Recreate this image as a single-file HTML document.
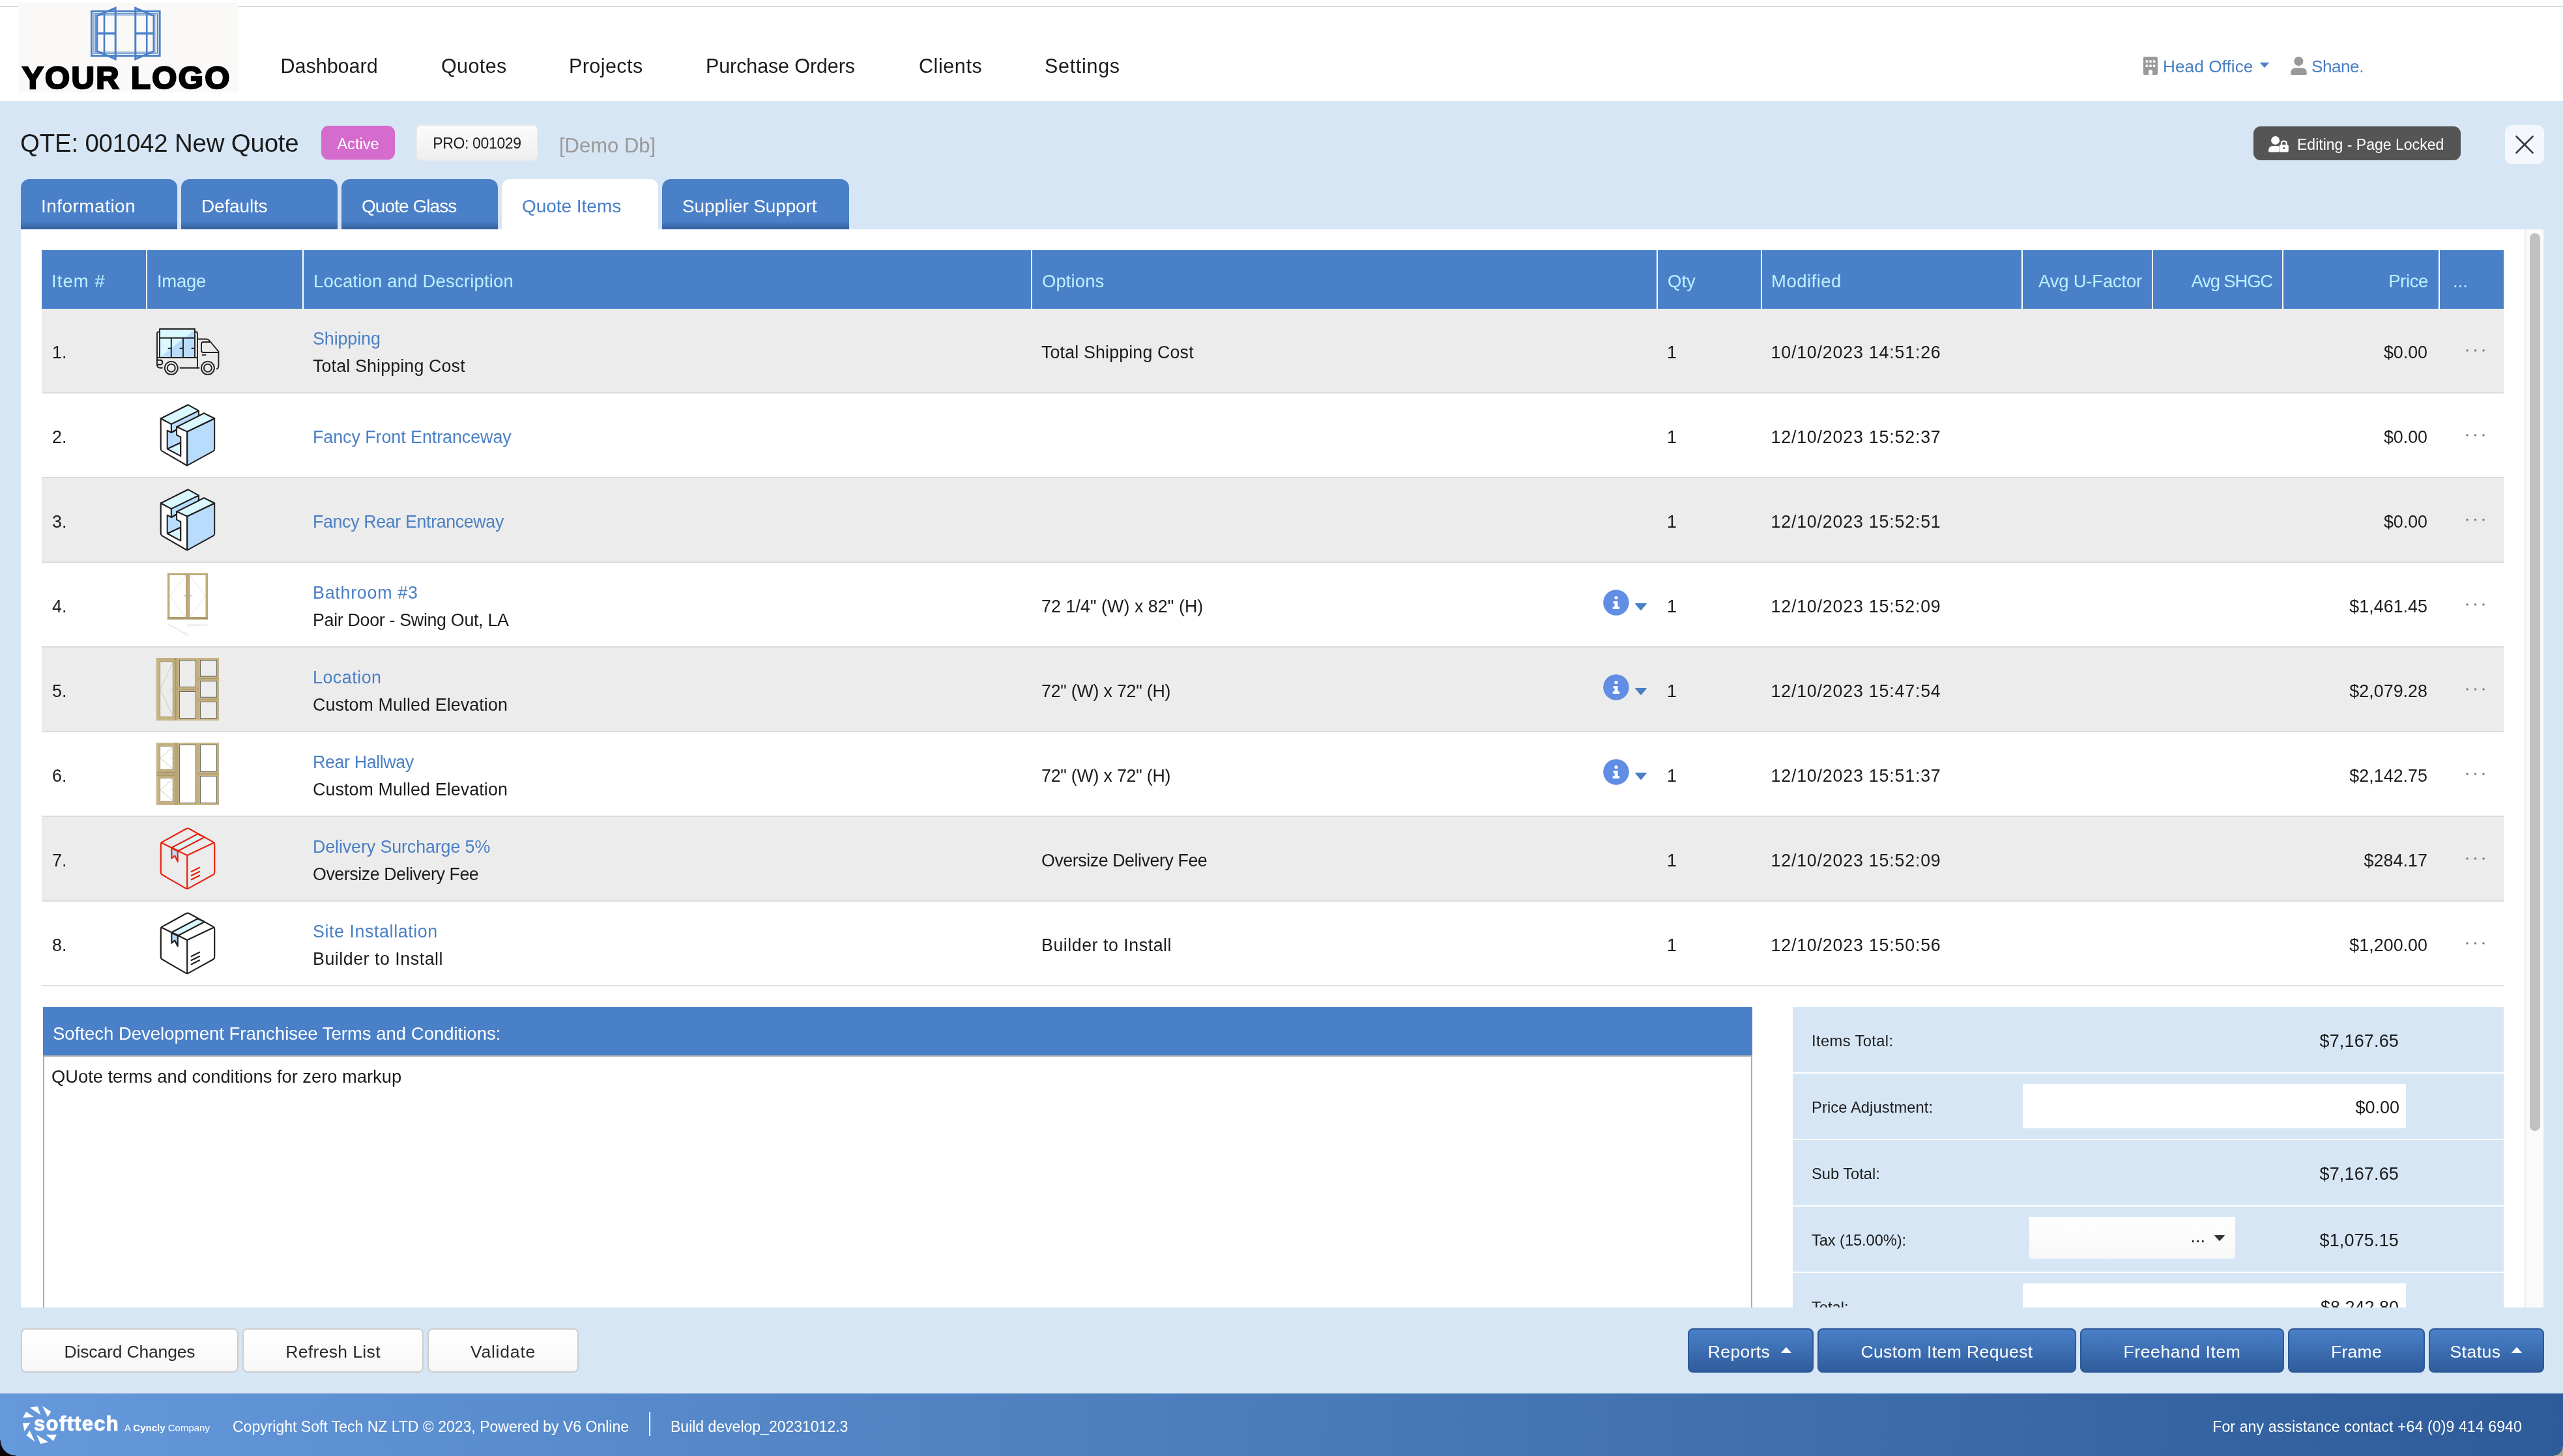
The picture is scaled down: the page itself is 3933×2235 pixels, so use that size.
<!DOCTYPE html>
<html lang="en">
<head>
<meta charset="utf-8">
<title>Quote 001042</title>
<style>
*{box-sizing:border-box;margin:0;padding:0}
html,body{width:3933px;height:2235px;overflow:hidden;background:#d6e6f5}
body{font-family:"Liberation Sans",sans-serif;color:#1b1b1b;position:relative;font-size:26.8px;will-change:transform}
.abs{position:absolute}
.t{position:absolute;white-space:nowrap;line-height:1}
svg{position:absolute;display:block;overflow:visible}
#hdr{left:0;top:0;width:3933px;height:155px;background:#fff}
#topline{left:0;top:9px;width:3933px;height:2px;background:#dadada}
#logo{left:28px;top:4px;width:338px;height:138px;background:#faf9f7}
#logotxt{left:34px;top:94.700px;font-size:49px;font-weight:bold;color:#000;-webkit-text-stroke:2.600px #000;letter-spacing:2.350px}
.nav{font-size:30.5px;top:86px;color:#1b1b1b}
.navr{font-size:26.2px;top:88.5px;color:#4a7fc5}
#title{left:31px;top:201px;font-size:38.4px;color:#1b1b1b}
#active{left:493px;top:193px;width:113px;height:52px;border-radius:11px;background:#d56bcc;color:#fff;font-size:23.5px;text-align:center;line-height:56px}
#pro{left:638px;top:191px;width:188px;height:56px;border-radius:8px;background:linear-gradient(#fbfbfb,#efefef);border:2px solid #e6e9ec;color:#1b1b1b;font-size:23px;text-align:center;line-height:55.500px}
#demo{left:858px;top:207.500px;font-size:31px;color:#9b9997}
#editing{left:3458px;top:194px;width:318px;height:52px;border-radius:11px;background:#555;color:#fff;font-size:23px;line-height:52px}
#closeb{left:3844px;top:192px;width:60px;height:60px;border-radius:11px;background:#f4f8fc}
.tab{top:275px;height:77px;border-radius:13px 13px 0 0;background:linear-gradient(#4a80c8 0,#4a80c8 84%,#345f9e 100%);color:#fff;font-size:28px;line-height:84px;padding-left:31px;white-space:nowrap}
.tab.on{background:#fff;color:#4a7fc5}
#panel{left:32px;top:352px;width:3872px;height:1655px;background:#fff}
#sbtrack{left:3874px;top:352px;width:30px;height:1655px;background:#fafafa;border-left:2px solid #ececec;border-right:2px solid #efefef}
#sbthumb{left:3882px;top:358px;width:16px;height:1378px;border-radius:8px;background:#c1c1c1}
#thead{left:64px;top:384px;width:3778px;height:90px;background:#4a80c8}
.th{position:absolute;top:0;height:90px;line-height:96px;color:#bdf0ff;font-size:27.5px;white-space:nowrap}
.vs{position:absolute;top:0;width:2px;height:90px;background:#fff}
.row{position:absolute;left:64px;width:3778px;height:130px;border-bottom:2px solid #dcdcdc}
.row.g{background:#ececec}
.row .t{font-size:26.8px}
.ic{left:156px;top:6px}
.lk{color:#4a7fc5}
.l1{top:33.3px}.l2{top:74.5px}.m{top:53.8px}
.num{left:16px}.loc{left:416px}.opt{left:1534px}.qty{left:2494px}.mod{left:2653.500px;letter-spacing:.8px}.prc{right:117px}
.dots{left:3719px;top:61px}
.info{left:2396px;top:40.500px}
.car{left:2444.500px;top:62px}
#termh{left:66px;top:1546px;width:2623px;height:74px;background:#4a80c8;color:#fff;font-size:27.5px;line-height:81px;padding-left:15px;white-space:nowrap}
#termb{left:66px;top:1620px;width:2623px;height:387px;border-left:2px solid #ababab;border-right:2px solid #ababab;border-top:2px solid #b0b0b0;background:#fff}
.tot{position:absolute;left:2751px;width:1091px;height:99.5px;background:#d6e6f5}
.tl{font-size:23.7px;left:29px;top:41px}
.tv{font-size:27px;right:161px;top:39px}
.inp{position:absolute;background:#fff}
.bw{position:absolute;top:2039px;height:68px;border-radius:8px;background:linear-gradient(#fff,#f7f7f7);border:2px solid #cdcdcd;color:#2a2a2a;font-size:26.5px;line-height:69px;text-align:center;white-space:nowrap}
.bb{position:absolute;top:2039px;height:68px;border-radius:8px;background:linear-gradient(#4a80c8,#2f5c9c);border:2px solid #2e5896;color:#fff;font-size:26.5px;line-height:68px;text-align:center;white-space:nowrap}
#foot{left:0;top:2139px;width:3933px;height:96px;background:linear-gradient(92deg,#6599dc 0,#4a7bba 50%,#2e5b99 100%)}
.ft{font-size:23px;color:#fff;top:2179px}
</style>
</head>
<body>
<div class="abs" id="hdr"></div>
<div class="abs" id="topline"></div>
<div class="abs" id="logo"></div>
<svg style="left:139px;top:10px" width="108" height="84" viewBox="139 10 108 84" fill="none" stroke="#4a80c8">
<rect x="140.5" y="17.4" width="104.6" height="68.2" stroke-width="3"/>
<rect x="144" y="20.8" width="97.6" height="61.4" stroke-width="1.2"/>
<rect x="146.3" y="23" width="93" height="57" stroke-width="1"/>
<path d="M148.8 24.4L177.2 12.3V90.7L148.8 78.6Z" stroke-width="3"/>
<path d="M236 24.4L207.8 12.3V90.7L236 78.6Z" stroke-width="3"/>
<path d="M160 20V83M225.2 20V83" stroke-width="2.6"/>
<path d="M149 51.2H177M208 51.2H236" stroke-width="3.4"/>
</svg>
<div class="t" id="logotxt">YOUR LOGO</div>
<div class="t nav" style="left:430.500px"><span style="letter-spacing:-0.01px">Dashboard</span></div>
<div class="t nav" style="left:677px"><span style="letter-spacing:0.39px">Quotes</span></div>
<div class="t nav" style="left:873px"><span style="letter-spacing:0.43px">Projects</span></div>
<div class="t nav" style="left:1083px"><span style="letter-spacing:-0.11px">Purchase Orders</span></div>
<div class="t nav" style="left:1410px"><span style="letter-spacing:0.58px">Clients</span></div>
<div class="t nav" style="left:1603px"><span style="letter-spacing:0.69px">Settings</span></div>
<svg style="left:3289px;top:86.5px" width="22" height="28" viewBox="0 0 22 28"><path d="M2.5 0H19.5Q22 0 22 2.5V25.5Q22 28 19.5 28H14V22.5Q14 20 11 20Q8 20 8 22.500V28H2.5Q0 28 0 25.5V2.5Q0 0 2.5 0Z" fill="#999"/><g fill="#fff"><rect x="3.6" y="5.6" width="3.6" height="3.4" rx=".6"/><rect x="9.2" y="5.600" width="3.6" height="3.4" rx=".6"/><rect x="14.8" y="5.6" width="3.6" height="3.4" rx=".6"/><rect x="3.6" y="12.6" width="3.6" height="3.4" rx=".6"/><rect x="9.2" y="12.6" width="3.6" height="3.4" rx=".6"/><rect x="14.8" y="12.6" width="3.6" height="3.4" rx=".6"/></g></svg>
<div class="t navr" style="left:3319px"><span style="letter-spacing:0.06px">Head Office</span></div>
<svg style="left:3467px;top:96px" width="16" height="8" viewBox="0 0 16 8"><path d="M.6 0H15.4L8 8Z" fill="#4a7fc5"/></svg>
<svg style="left:3515px;top:86.5px" width="25" height="28" viewBox="0 0 25 28" fill="#999"><circle cx="12.3" cy="7.100" r="7.1"/><path d="M0 26Q0 17.2 8 17.2H17Q25 17.2 25 26Q25 28 23 28H2Q0 28 0 26Z"/></svg>
<div class="t navr" style="left:3547px"><span style="letter-spacing:-0.51px">Shane.</span></div>
<div class="t" id="title"><span style="letter-spacing:-0.17px">QTE: 001042 New Quote</span></div>
<div class="abs" id="active"><span style="letter-spacing:0.04px">Active</span></div>
<div class="abs" id="pro"><span style="letter-spacing:-0.37px">PRO: 001029</span></div>
<div class="t" id="demo">[Demo Db]</div>
<div class="abs" id="editing"><svg style="left:23px;top:15px" width="31" height="25" viewBox="0 0 31 25" fill="#fff"><circle cx="10.6" cy="6.500" r="6.5"/><path d="M0 22.5Q0 15 7 15H14.5Q16.500 15 16.500 17V24.5H1.500Q0 24.5 0 22.5Z"/><rect x="16.8" y="13.2" width="14" height="11.3" rx="2"/><path d="M20 13.500V11Q20 7.600 23.800 7.600Q27.600 7.600 27.600 11V13.500" fill="none" stroke="#fff" stroke-width="2.200"/><circle cx="23.8" cy="18.6" r="1.5" fill="#555"/></svg><span style="position:absolute;left:67px;top:2px;white-space:nowrap"><span style="letter-spacing:0.01px">Editing - Page Locked</span></span></div>
<div class="abs" id="closeb"><svg style="left:17px;top:17px" width="26" height="26" viewBox="0 0 26 26"><path d="M0.500 .5L25.500 25.500M25.500 .5L.5 25.500" stroke="#343a40" stroke-width="2.600" stroke-linecap="round"/></svg></div>
<div class="abs tab" style="left:32px;width:240px"><span style="letter-spacing:0.46px">Information</span></div>
<div class="abs tab" style="left:278px;width:240px"><span style="letter-spacing:-0.16px">Defaults</span></div>
<div class="abs tab" style="left:524px;width:240px"><span style="letter-spacing:-0.93px">Quote Glass</span></div>
<div class="abs tab on" style="left:770px;width:240px"><span style="letter-spacing:-0.03px">Quote Items</span></div>
<div class="abs tab" style="left:1016px;width:287px"><span style="letter-spacing:-0.14px">Supplier Support</span></div>
<div class="abs" id="panel"></div>
<div class="abs" id="sbtrack"></div>
<div class="abs" id="sbthumb"></div>
<div class="abs" id="thead">
<div class="th" style="left:15px"><span style="letter-spacing:1.10px">Item #</span></div><div class="vs" style="left:160px"></div>
<div class="th" style="left:177px"><span style="letter-spacing:-0.28px">Image</span></div><div class="vs" style="left:400px"></div>
<div class="th" style="left:417px"><span style="letter-spacing:0.18px">Location and Description</span></div><div class="vs" style="left:1518px"></div>
<div class="th" style="left:1535px"><span style="letter-spacing:0.09px">Options</span></div><div class="vs" style="left:2478px"></div>
<div class="th" style="left:2495px"><span style="letter-spacing:0.00px">Qty</span></div><div class="vs" style="left:2638px"></div>
<div class="th" style="left:2654px"><span style="letter-spacing:0.48px">Modified</span></div><div class="vs" style="left:3038px"></div>
<div class="th" style="right:555px"><span style="letter-spacing:-0.21px">Avg U-Factor</span></div><div class="vs" style="left:3238px"></div>
<div class="th" style="right:355px"><span style="letter-spacing:-1.20px">Avg SHGC</span></div><div class="vs" style="left:3438px"></div>
<div class="th" style="right:116px"><span style="letter-spacing:-0.36px">Price</span></div><div class="vs" style="left:3678px"></div>
<div class="th" style="left:3700px">...</div>
</div>
<div class="row g" style="top:474px"><div class="t num m">1.</div><svg class="ic" viewBox="0 0 140 120" width="140" height="120" fill="none" stroke="#231f20" stroke-width="1.9" stroke-linecap="round" stroke-linejoin="round">
<rect x="25" y="25" width="54" height="44" fill="#d9f8ff" stroke="none"/>
<polygon points="79,25 79,69 25,69" fill="#b8dcfb" stroke="none"/>
<polygon points="79,25 79,38.7 62,38.7" fill="#d9f8ff" stroke="none"/>
<polygon points="79,25.5 65,38 79,38" fill="#b8dcfb" stroke="none"/>
<rect x="25" y="25" width="54" height="44"/>
<path d="M25 38.7H79M42.8 38.7V69M61 38.7V69M38.4 54.8H42.4M56.4 54.8H60.4M74.4 54.8H78.4"/>
<path d="M24 29.2Q21 29.2 21 32.5V79.7Q21 84.7 26 84.7H29"/>
<path d="M80 29.2Q83 29.2 83 32.5V84.7"/>
<path d="M21 69H83"/>
<path d="M21 72.7H25.5Q29.3 72.7 29.3 76.2Q29.3 79.7 25.5 79.7H21"/>
<circle cx="42.8" cy="84.9" r="10"/><circle cx="42.8" cy="84.9" r="6"/>
<circle cx="98.9" cy="84.9" r="10"/><circle cx="98.9" cy="84.9" r="6"/>
<path d="M56.5 84.7H85.5"/>
<path d="M84 40.5H96.5Q99.5 40.5 101.5 43L115.4 59.6V81Q115.4 85.5 112.5 86.3"/>
<path d="M101.8 45H92Q89 45 89 48V58Q89 61 92 61H115.2"/>
<path d="M90.5 64.9H95.5"/>
</svg><div class="t loc lk l1"><span style="letter-spacing:-0.07px">Shipping</span></div><div class="t loc l2"><span style="letter-spacing:0.15px">Total Shipping Cost</span></div><div class="t opt m"><span style="letter-spacing:0.15px">Total Shipping Cost</span></div><div class="t qty m">1</div><div class="t mod m">10/10/2023 14:51:26</div><div class="t prc m">$0.00</div><svg class="dots" width="32" height="6" viewBox="0 0 32 6" fill="#777"><circle cx="3" cy="3" r="1.700"/><circle cx="15.500" cy="3" r="1.700"/><circle cx="28" cy="3" r="1.700"/></svg></div>
<div class="row" style="top:604px"><div class="t num m">2.</div><svg class="ic" viewBox="0 0 140 120" width="140" height="120" fill="none" stroke="#231f20" stroke-width="2" stroke-linejoin="round">
<path d="M68.6 11.5L84.9 20.6V28.4L93.1 24.3L109.2 32.5V79Q109.2 81.5 107 82.7L69 103.7Q67.2 104.8 65.4 103.7L29 82.5Q26.8 81.2 26.8 78.7V32.500Z" fill="#b8dcfb"/>
<polygon points="26.8,32.5 68.6,11.5 84.9,20.6 42.8,41.2" fill="#d9f8ff"/>
<polygon points="51.1,45.3 93.1,24.3 109.2,32.5 67.2,52.7" fill="#d9f8ff"/>
<polygon points="42.8,41.2 84.9,20.6 84.9,28.4 51.1,45.3 51.1,49.5 42.8,54" fill="#b8dcfb"/>
<polygon points="36.7,79.1 56.8,69.6 57.3,90.2" fill="#d9f8ff"/>
<path d="M26.8 32.5L42.8 41.2V54L36.7 50.7V79.1L57.3 90.2V61L51.1 57.7V45.3L67.2 52.7V104.4L65.4 103.7L29 82.5Q26.8 81.2 26.8 78.7Z" fill="#fff"/>
<path d="M36.7 79.1L56.8 69.6M42.8 54L51.1 49.5M67.2 52.7L109.2 32.5M67.2 52.7V104.4"/>
</svg><div class="t loc lk m"><span style="letter-spacing:-0.03px">Fancy Front Entranceway</span></div><div class="t qty m">1</div><div class="t mod m">12/10/2023 15:52:37</div><div class="t prc m">$0.00</div><svg class="dots" width="32" height="6" viewBox="0 0 32 6" fill="#777"><circle cx="3" cy="3" r="1.700"/><circle cx="15.500" cy="3" r="1.700"/><circle cx="28" cy="3" r="1.700"/></svg></div>
<div class="row g" style="top:734px"><div class="t num m">3.</div><svg class="ic" viewBox="0 0 140 120" width="140" height="120" fill="none" stroke="#231f20" stroke-width="2" stroke-linejoin="round">
<path d="M68.6 11.5L84.9 20.6V28.4L93.1 24.3L109.2 32.5V79Q109.2 81.5 107 82.7L69 103.7Q67.2 104.8 65.4 103.7L29 82.5Q26.8 81.2 26.8 78.7V32.500Z" fill="#b8dcfb"/>
<polygon points="26.8,32.5 68.6,11.5 84.9,20.6 42.8,41.2" fill="#d9f8ff"/>
<polygon points="51.1,45.3 93.1,24.3 109.2,32.5 67.2,52.7" fill="#d9f8ff"/>
<polygon points="42.8,41.2 84.9,20.6 84.9,28.4 51.1,45.3 51.1,49.5 42.8,54" fill="#b8dcfb"/>
<polygon points="36.7,79.1 56.8,69.6 57.3,90.2" fill="#d9f8ff"/>
<path d="M26.8 32.5L42.8 41.2V54L36.7 50.7V79.1L57.3 90.2V61L51.1 57.7V45.3L67.2 52.7V104.4L65.4 103.7L29 82.5Q26.8 81.2 26.8 78.7Z" fill="#fff"/>
<path d="M36.7 79.1L56.8 69.6M42.8 54L51.1 49.5M67.2 52.7L109.2 32.5M67.2 52.7V104.4"/>
</svg><div class="t loc lk m"><span style="letter-spacing:-0.36px">Fancy Rear Entranceway</span></div><div class="t qty m">1</div><div class="t mod m">12/10/2023 15:52:51</div><div class="t prc m">$0.00</div><svg class="dots" width="32" height="6" viewBox="0 0 32 6" fill="#777"><circle cx="3" cy="3" r="1.700"/><circle cx="15.500" cy="3" r="1.700"/><circle cx="28" cy="3" r="1.700"/></svg></div>
<div class="row" style="top:864px"><div class="t num m">4.</div><svg class="ic" viewBox="0 0 140 120" width="140" height="120" fill="none">
<rect x="36.9" y="10" width="62.1" height="70.9" fill="#bfab7b"/>
<rect x="40.4" y="13" width="24.6" height="64" fill="#fff"/>
<rect x="70.9" y="13" width="24.6" height="64" fill="#fff"/>
<rect x="36.9" y="77.4" width="62.1" height="3.5" fill="#aa9869"/>
<rect x="65" y="10" width="1.2" height="70.9" fill="#ab996e"/><rect x="69.7" y="10" width="1.2" height="70.9" fill="#ab996e"/>
<path d="M65 13L40.4 45L65 77M70.9 13L95.5 45L70.9 77" stroke="#d4d4d4" stroke-width="0.7"/>
<path d="M62 44.7H74" stroke="#a8a8a8" stroke-width="1.2"/>
<path d="M37.5 88L66 103.5" stroke="#ececec" stroke-width="2"/><path d="M69 89.6H98.8" stroke="#ececec" stroke-width="2.4"/>
<circle cx="66.5" cy="104" r="1.6" stroke="#e4e4e4" stroke-width="0.8"/><circle cx="69.3" cy="89.6" r="1.6" stroke="#e4e4e4" stroke-width="0.8"/>
</svg><div class="t loc lk l1"><span style="letter-spacing:0.76px">Bathroom #3</span></div><div class="t loc l2"><span style="letter-spacing:-0.31px">Pair Door - Swing Out, LA</span></div><div class="t opt m"><span style="letter-spacing:0.07px">72 1/4&quot; (W) x 82&quot; (H)</span></div><svg class="info" width="40" height="40" viewBox="0 0 40 40"><circle cx="20" cy="20" r="19.8" fill="#618de3"/><g fill="#fff"><circle cx="20" cy="12.500" r="2.600"/><path d="M16.700 18H21.600Q22.600 18 22.600 19V26.200H24.200Q25.400 26.200 25.400 27.400V28.800Q25.400 30 24.200 30H15.800Q14.600 30 14.600 28.800V27.400Q14.600 26.200 15.800 26.200H17.600V21.600H16.700Q15.500 21.600 15.500 20.400V19.200Q15.500 18 16.700 18Z"/></g></svg><svg class="car" width="18" height="11" viewBox="0 0 18 11"><path d="M1.200 0H16.800Q18.600 0 17.400 1.400L10 10.200Q9 11.300 8 10.200L.6 1.400Q-.6 0 1.200 0Z" fill="#4a7fc5"/></svg><div class="t qty m">1</div><div class="t mod m">12/10/2023 15:52:09</div><div class="t prc m"><span style="letter-spacing:0.05px">$1,461.45</span></div><svg class="dots" width="32" height="6" viewBox="0 0 32 6" fill="#777"><circle cx="3" cy="3" r="1.700"/><circle cx="15.500" cy="3" r="1.700"/><circle cx="28" cy="3" r="1.700"/></svg></div>
<div class="row g" style="top:994px"><div class="t num m">5.</div><svg class="ic" viewBox="0 0 140 120" width="140" height="120" fill="none">
<rect x="20" y="10" width="96" height="95.9" fill="#bfab7b"/>
<rect x="21.3" y="11.3" width="93.4" height="93.3" stroke="#cdbb8c" stroke-width="1"/>
<rect x="47.6" y="10" width="2.8" height="95.9" fill="#ab996e"/>
<rect x="51.4" y="57" width="32" height="1.6" fill="#ab996e"/>
<rect x="83.6" y="41" width="32.4" height="1.4" fill="#ab996e"/>
<rect x="83.6" y="73" width="32.4" height="1.4" fill="#ab996e"/>
<rect x="23.7" y="13.7" width="23.5" height="88.4" stroke="#cdbb8c" stroke-width="1.1"/>
<rect x="25.7" y="15.7" width="19.5" height="84.4" fill="#ececec" stroke="#a39166" stroke-width="0.8"/>
<rect x="53.6" y="11.6" width="28.7" height="44.8" stroke="#cdbb8c" stroke-width="1.1"/>
<rect x="55.6" y="13.6" width="24.7" height="40.8" fill="#ececec" stroke="#555" stroke-width="0.8"/>
<rect x="53.6" y="59.6" width="28.7" height="45.0" stroke="#cdbb8c" stroke-width="1.1"/>
<rect x="55.6" y="61.6" width="24.7" height="41.0" fill="#ececec" stroke="#555" stroke-width="0.8"/>
<rect x="85.5" y="11.6" width="29.0" height="28.5" stroke="#cdbb8c" stroke-width="1.1"/>
<rect x="87.5" y="13.6" width="25.0" height="24.5" fill="#ececec" stroke="#555" stroke-width="0.8"/>
<rect x="85.5" y="43.7" width="29.0" height="28.5" stroke="#cdbb8c" stroke-width="1.1"/>
<rect x="87.5" y="45.7" width="25.0" height="24.5" fill="#ececec" stroke="#555" stroke-width="0.8"/>
<rect x="85.5" y="75.6" width="29.0" height="29.0" stroke="#cdbb8c" stroke-width="1.1"/>
<rect x="87.5" y="77.6" width="25.0" height="25.0" fill="#ececec" stroke="#555" stroke-width="0.8"/>
<path d="M45.2 17.5L25.7 58L45.2 98.5" stroke="#bdbdbd" stroke-width="0.8"/>
<path d="M41 58H44.5" stroke="#bdbdbd" stroke-width="0.8"/>
</svg><div class="t loc lk l1"><span style="letter-spacing:0.52px">Location</span></div><div class="t loc l2"><span style="letter-spacing:0.11px">Custom Mulled Elevation</span></div><div class="t opt m"><span style="letter-spacing:-0.23px">72&quot; (W) x 72&quot; (H)</span></div><svg class="info" width="40" height="40" viewBox="0 0 40 40"><circle cx="20" cy="20" r="19.8" fill="#618de3"/><g fill="#fff"><circle cx="20" cy="12.500" r="2.600"/><path d="M16.700 18H21.600Q22.600 18 22.600 19V26.200H24.200Q25.400 26.200 25.400 27.400V28.800Q25.400 30 24.200 30H15.800Q14.600 30 14.600 28.800V27.400Q14.600 26.200 15.800 26.200H17.600V21.600H16.700Q15.500 21.600 15.500 20.400V19.200Q15.500 18 16.700 18Z"/></g></svg><svg class="car" width="18" height="11" viewBox="0 0 18 11"><path d="M1.200 0H16.800Q18.600 0 17.400 1.400L10 10.200Q9 11.300 8 10.200L.6 1.400Q-.6 0 1.200 0Z" fill="#4a7fc5"/></svg><div class="t qty m">1</div><div class="t mod m">12/10/2023 15:47:54</div><div class="t prc m"><span style="letter-spacing:0.05px">$2,079.28</span></div><svg class="dots" width="32" height="6" viewBox="0 0 32 6" fill="#777"><circle cx="3" cy="3" r="1.700"/><circle cx="15.500" cy="3" r="1.700"/><circle cx="28" cy="3" r="1.700"/></svg></div>
<div class="row" style="top:1124px"><div class="t num m">6.</div><svg class="ic" viewBox="0 0 140 120" width="140" height="120" fill="none">
<rect x="20" y="10" width="96" height="95.9" fill="#bfab7b"/>
<rect x="21.3" y="11.3" width="93.4" height="93.3" stroke="#cdbb8c" stroke-width="1"/>
<rect x="47.6" y="10" width="5" height="95.9" fill="#ab996e"/>
<rect x="20" y="54.6" width="32" height="7" fill="#ab996e"/>
<rect x="83.6" y="57.2" width="32.4" height="1.4" fill="#ab996e"/>
<rect x="23.7" y="13.7" width="23.5" height="39.4" stroke="#cdbb8c" stroke-width="1.1"/>
<rect x="25.7" y="15.7" width="19.5" height="35.4" fill="#fff" stroke="#a39166" stroke-width="0.8"/>
<rect x="23.7" y="62.7" width="23.5" height="39.4" stroke="#cdbb8c" stroke-width="1.1"/>
<rect x="25.7" y="64.7" width="19.5" height="35.4" fill="#fff" stroke="#a39166" stroke-width="0.8"/>
<rect x="53.6" y="11.6" width="28.7" height="93.0" stroke="#cdbb8c" stroke-width="1.1"/>
<rect x="55.6" y="13.6" width="24.7" height="89.0" fill="#fff" stroke="#555" stroke-width="0.8"/>
<rect x="85.5" y="11.6" width="29.0" height="44.6" stroke="#cdbb8c" stroke-width="1.1"/>
<rect x="87.5" y="13.6" width="25.0" height="40.6" fill="#fff" stroke="#555" stroke-width="0.8"/>
<rect x="85.5" y="59.6" width="29.0" height="45.0" stroke="#cdbb8c" stroke-width="1.1"/>
<rect x="87.5" y="61.6" width="25.0" height="41.0" fill="#fff" stroke="#555" stroke-width="0.8"/>
<rect x="20" y="57" width="28" height="2.2" fill="#bfab7b"/>
<rect x="49.2" y="10" width="1.8" height="95.9" fill="#bfab7b"/>
<path d="M45.2 17L25.7 33.4L45.2 49.8" stroke="#bdbdbd" stroke-width="0.8"/>
<path d="M45.2 66L25.7 82.4L45.2 98.8" stroke="#bdbdbd" stroke-width="0.8"/>
<path d="M41 33.8H44.5M41 82.3H44.5" stroke="#bdbdbd" stroke-width="0.8"/>
</svg><div class="t loc lk l1"><span style="letter-spacing:-0.37px">Rear Hallway</span></div><div class="t loc l2"><span style="letter-spacing:0.11px">Custom Mulled Elevation</span></div><div class="t opt m"><span style="letter-spacing:-0.23px">72&quot; (W) x 72&quot; (H)</span></div><svg class="info" width="40" height="40" viewBox="0 0 40 40"><circle cx="20" cy="20" r="19.8" fill="#618de3"/><g fill="#fff"><circle cx="20" cy="12.500" r="2.600"/><path d="M16.700 18H21.600Q22.600 18 22.600 19V26.200H24.200Q25.400 26.200 25.400 27.400V28.800Q25.400 30 24.200 30H15.800Q14.600 30 14.600 28.800V27.400Q14.600 26.200 15.800 26.200H17.600V21.600H16.700Q15.500 21.600 15.500 20.400V19.200Q15.500 18 16.700 18Z"/></g></svg><svg class="car" width="18" height="11" viewBox="0 0 18 11"><path d="M1.200 0H16.800Q18.600 0 17.400 1.400L10 10.200Q9 11.300 8 10.200L.6 1.400Q-.6 0 1.200 0Z" fill="#4a7fc5"/></svg><div class="t qty m">1</div><div class="t mod m">12/10/2023 15:51:37</div><div class="t prc m"><span style="letter-spacing:0.05px">$2,142.75</span></div><svg class="dots" width="32" height="6" viewBox="0 0 32 6" fill="#777"><circle cx="3" cy="3" r="1.700"/><circle cx="15.500" cy="3" r="1.700"/><circle cx="28" cy="3" r="1.700"/></svg></div>
<div class="row g" style="top:1254px"><div class="t num m">7.</div><svg class="ic" viewBox="0 0 140 120" width="140" height="120" fill="none" stroke="#e8230f" stroke-width="2.2" stroke-linejoin="round" stroke-linecap="round">
<path d="M65.6 12.2Q68 10.9 70.4 12.2L107 32.4Q109.2 33.7 109.2 36.2V79Q109.2 81.5 107 82.8L69.4 103.6Q67.2 104.8 65 103.6L29 82.8Q26.8 81.5 26.8 79V36.2Q26.8 33.7 29 32.4Z" fill="none"/>
<polygon points="43.3,41.2 83.2,20.2 93.9,25.1 53.6,46.1" fill="#d9f8ff"/>
<path d="M43.3 42V57.7L48.2 53.6L52.7 62.6V46.6Z" fill="#b8dcfb"/>
<path d="M27.6 33.6L67.2 53.1L108.4 33.6M67.2 53.1V104.2"/>
<path d="M73.7 77.9L86.1 71.7M73.7 84L86.1 77.9M73.7 90.2L86.1 83.9" stroke-width="2.2"/>
</svg><div class="t loc lk l1"><span style="letter-spacing:-0.09px">Delivery Surcharge 5%</span></div><div class="t loc l2"><span style="letter-spacing:-0.44px">Oversize Delivery Fee</span></div><div class="t opt m"><span style="letter-spacing:-0.44px">Oversize Delivery Fee</span></div><div class="t qty m">1</div><div class="t mod m">12/10/2023 15:52:09</div><div class="t prc m"><span style="letter-spacing:0.10px">$284.17</span></div><svg class="dots" width="32" height="6" viewBox="0 0 32 6" fill="#777"><circle cx="3" cy="3" r="1.700"/><circle cx="15.500" cy="3" r="1.700"/><circle cx="28" cy="3" r="1.700"/></svg></div>
<div class="row" style="top:1384px"><div class="t num m">8.</div><svg class="ic" viewBox="0 0 140 120" width="140" height="120" fill="none" stroke="#231f20" stroke-width="2.2" stroke-linejoin="round" stroke-linecap="round">
<path d="M65.6 12.2Q68 10.9 70.4 12.2L107 32.4Q109.2 33.7 109.2 36.2V79Q109.2 81.5 107 82.8L69.4 103.6Q67.2 104.8 65 103.6L29 82.8Q26.8 81.5 26.8 79V36.2Q26.8 33.7 29 32.4Z" fill="#fff"/>
<polygon points="43.3,41.2 83.2,20.2 93.9,25.1 53.6,46.1" fill="#d9f8ff"/>
<path d="M43.3 42V57.7L48.2 53.6L52.7 62.6V46.6Z" fill="#b8dcfb"/>
<path d="M27.6 33.6L67.2 53.1L108.4 33.6M67.2 53.1V104.2"/>
<path d="M73.7 77.9L86.1 71.7M73.7 84L86.1 77.9M73.7 90.2L86.1 83.9" stroke-width="2.2"/>
</svg><div class="t loc lk l1"><span style="letter-spacing:0.59px">Site Installation</span></div><div class="t loc l2"><span style="letter-spacing:0.52px">Builder to Install</span></div><div class="t opt m"><span style="letter-spacing:0.52px">Builder to Install</span></div><div class="t qty m">1</div><div class="t mod m">12/10/2023 15:50:56</div><div class="t prc m"><span style="letter-spacing:0.05px">$1,200.00</span></div><svg class="dots" width="32" height="6" viewBox="0 0 32 6" fill="#777"><circle cx="3" cy="3" r="1.700"/><circle cx="15.500" cy="3" r="1.700"/><circle cx="28" cy="3" r="1.700"/></svg></div>
<div class="abs" id="termh">Softech Development Franchisee Terms and Conditions:</div>
<div class="abs" id="termb"><div class="t" style="left:11px;top:17px;font-size:27.3px">QUote terms and conditions for zero markup</div></div>
<div class="tot" style="top:1546px"><div class="t tl"><span style="letter-spacing:0.40px">Items Total:</span></div><div class="t tv"><span style="letter-spacing:0.15px">$7,167.65</span></div></div>
<div class="tot" style="top:1648px"><div class="t tl"><span style="letter-spacing:0.11px">Price Adjustment:</span></div><div class="inp" style="left:353px;top:16px;width:588px;height:68px"></div><div class="t tv" style="right:160px">$0.00</div></div>
<div class="tot" style="top:1750px"><div class="t tl"><span style="letter-spacing:-0.01px">Sub Total:</span></div><div class="t tv"><span style="letter-spacing:0.15px">$7,167.65</span></div></div>
<div class="tot" style="top:1852px"><div class="t tl"><span style="letter-spacing:-0.08px">Tax (15.00%):</span></div><div class="inp" style="left:363px;top:16px;width:316px;height:64px;background:linear-gradient(#fff,#f7f7f7)"><div class="t" style="right:46px;top:17px;font-size:27px">...</div><svg style="left:284px;top:28px" width="16" height="9" viewBox="0 0 16 9"><path d="M.8 0H15.200Q16.500 0 15.500 1.100L8.700 8.500Q8 9.200 7.300 8.500L.5 1.100Q-.5 0 .8 0Z" fill="#333"/></svg></div><div class="t tv"><span style="letter-spacing:0.15px">$1,075.15</span></div></div>
<div class="tot" style="top:1954px;height:53px;overflow:hidden"><div class="t tl" style="top:42px">Total:</div><div class="inp" style="left:353px;top:16px;width:588px;height:68px"></div><div class="t tv" style="top:40px">$8,242.80</div></div>
<div class="bw" style="left:32px;width:334px"><span style="letter-spacing:-0.16px">Discard Changes</span></div>
<div class="bw" style="left:372px;width:278px"><span style="letter-spacing:0.36px">Refresh List</span></div>
<div class="bw" style="left:656px;width:232px"><span style="letter-spacing:0.80px">Validate</span></div>
<div class="bb" style="left:2590px;width:193px"><span style="margin-right:36px"><span style="letter-spacing:0.37px">Reports</span></span><svg style="left:141px;top:27px" width="16" height="9" viewBox="0 0 16 9"><path d="M.8 9H15.200Q16.500 9 15.500 7.900L8.700 .5Q8 -.2 7.300 .5L.5 7.900Q-.5 9 .8 9Z" fill="#fff"/></svg></div>
<div class="bb" style="left:2789px;width:397px"><span style="letter-spacing:0.42px">Custom Item Request</span></div>
<div class="bb" style="left:3192px;width:313px"><span style="letter-spacing:0.57px">Freehand Item</span></div>
<div class="bb" style="left:3511px;width:210px"><span style="letter-spacing:0.26px">Frame</span></div>
<div class="bb" style="left:3727px;width:177px"><span style="margin-right:34px"><span style="letter-spacing:0.49px">Status</span></span><svg style="left:125px;top:27px" width="16" height="9" viewBox="0 0 16 9"><path d="M.8 9H15.200Q16.500 9 15.500 7.900L8.700 .5Q8 -.2 7.300 .5L.5 7.900Q-.5 9 .8 9Z" fill="#fff"/></svg></div>
<div class="abs" id="foot"></div>
<svg style="left:20px;top:2145px" width="80" height="80" viewBox="0 0 640 640" fill="#fff"><polygon points="205,125 300,110 340,215"/><polygon points="360,105 468,175 425,240"/><polygon points="160,175 255,240 122,250"/><polygon points="120,315 212,310 140,415"/><polygon points="205,405 270,545 165,465"/><polygon points="290,460 435,550 335,570"/><polygon points="405,460 535,458 495,535"/></svg>
<div class="t" style="left:52px;top:2170px;font-size:31px;font-weight:bold;color:#fff;letter-spacing:1.300px;-webkit-text-stroke:.9px #fff">softtech</div>
<div class="t" style="left:191px;top:2183.500px;font-size:15px;color:#fff">A <b>Cyncly</b> Company</div>
<div class="t ft" style="left:357px">Copyright Soft Tech NZ LTD © 2023, Powered by V6 Online</div>
<div class="abs" style="left:996px;top:2168px;width:2px;height:36px;background:#fff"></div>
<div class="t ft" style="left:1029px">Build develop_20231012.3</div>
<div class="t ft" style="right:63px;letter-spacing:.14px">For any assistance contact +64 (0)9 414 6940</div>
<div class="abs" style="left:0;top:2211px;width:24px;height:24px;background:radial-gradient(circle at 100% 0,rgba(0,0,0,0) 22.500px,#0b0606 23.800px)"></div>
<div class="abs" style="left:3919px;top:2221px;width:14px;height:14px;background:radial-gradient(circle at 0 0,rgba(0,0,0,0) 12.5px,#b5a790 14px)"></div>
</body>
</html>
